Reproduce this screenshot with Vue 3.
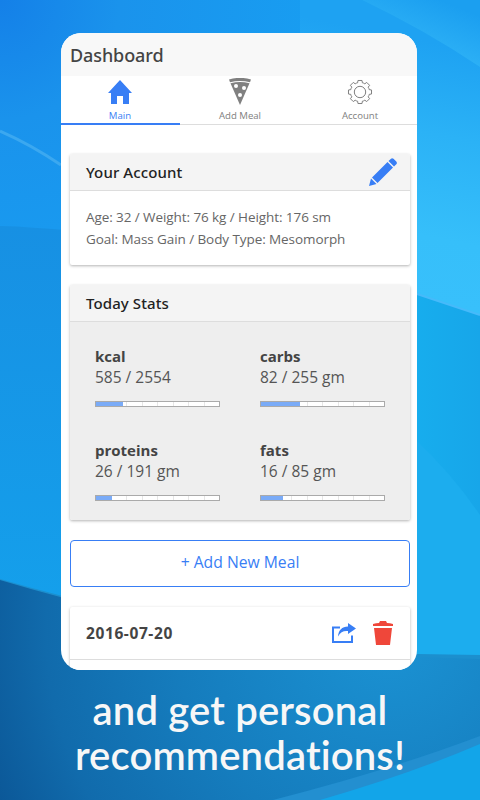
<template>
    <div class="promo">
        <svg class="backdrop" viewBox="0 0 480 800" preserveAspectRatio="none" aria-hidden="true">
            <defs>
                <radialGradient id="sky" gradientUnits="userSpaceOnUse" cx="0" cy="0" r="480">
                    <stop offset="0" stop-color="#1480e8" />
                    <stop offset="0.25" stop-color="#1a93ec" />
                    <stop offset="0.65" stop-color="#189df1" />
                    <stop offset="1" stop-color="#1ca2f1" />
                </radialGradient>
                <linearGradient id="left" x1="0" y1="0" x2="0" y2="1">
                    <stop offset="0" stop-color="#1790e3" />
                    <stop offset="1" stop-color="#14a1ec" />
                </linearGradient>
                <linearGradient id="corner" gradientUnits="userSpaceOnUse" x1="440" y1="0" x2="420" y2="50">
                    <stop offset="0" stop-color="#1b9ff0" />
                    <stop offset="1" stop-color="#2eb2f6" />
                </linearGradient>
                <linearGradient id="right" gradientUnits="userSpaceOnUse" x1="470" y1="50" x2="420" y2="300">
                    <stop offset="0" stop-color="#1ea2f2" />
                    <stop offset="0.35" stop-color="#2bb2f6" />
                    <stop offset="0.75" stop-color="#36bffa" />
                    <stop offset="1" stop-color="#38c0fb" />
                </linearGradient>
                <linearGradient id="lower" x1="0" y1="0" x2="1" y2="0">
                    <stop offset="0.7" stop-color="#17aeee" />
                    <stop offset="1" stop-color="#17a6e9" />
                </linearGradient>
                <radialGradient id="deep" gradientUnits="userSpaceOnUse" cx="390" cy="630" r="430">
                    <stop offset="0" stop-color="#1b93d4" />
                    <stop offset="0.5" stop-color="#157cbd" />
                    <stop offset="0.8" stop-color="#116bac" />
                    <stop offset="1" stop-color="#0b5797" />
                </radialGradient>
            </defs>
            <rect width="480" height="800" fill="url(#sky)" />
            <path d="M0 226Q60 227 240 250V640H0Z" fill="url(#left)" />
            <path d="M300 0H362Q425 30 480 67V330H300Z" fill="url(#right)" />
            <path d="M362 0H480V67Q425 30 362 0Z" fill="url(#corner)" />
            <path d="M240 260L417 294L480 315V700H240Z" fill="url(#lower)" />
            <path d="M417 441Q453 475 480 515V700H417Z" fill="#1cadee" />
            <path d="M417 294L480 315" stroke="#46bafa" stroke-width="2" />
            <path d="M0 131Q32 145 61 165" fill="none" stroke="#3ba8f0" stroke-width="3" />
            <path d="M0 579Q200 637 417 654L480 655V800H0Z" fill="#1c8fce" />
            <path d="M0 580Q200 640 417 657L480 659V800H0Z" fill="url(#deep)" />
            <path d="M273 800Q390 770 480 736V800Z" fill="#238fd0" />
            <path d="M320 800Q410 774 480 744V800Z" fill="#12a5e9" />
        </svg>

        <main class="phone">
            <div class="screen">
                <header class="title">Dashboard</header>

                <nav class="tabs">
                    <a v-for="tab in tabs" :key="tab.name" class="tab" :class="{ active: tab.name === current }" @click="current = tab.name">
                        <svg v-if="tab.icon === 'home'" class="tab-icon" viewBox="0 0 28 28">
                            <path d="M14 2L26 15H23V26H17V18H11V26H5V15H2Z" fill="currentColor" />
                        </svg>
                        <svg v-else-if="tab.icon === 'pizza'" class="tab-icon" viewBox="0 0 28 28">
                            <path d="M3 1.5Q14 -1.8 25 1.5L24 4.3Q14 1.5 4 4.3Z" fill="currentColor" />
                            <path d="M4.5 5.3Q14 2.7 23.5 5.3L14 27Z" fill="currentColor" />
                            <circle cx="10" cy="8" r="2" fill="#fff" />
                            <circle cx="18" cy="10" r="2" fill="#fff" />
                            <circle cx="14" cy="17" r="2" fill="#fff" />
                        </svg>
                        <svg v-else class="tab-icon" viewBox="0 0 28 28">
                            <path :d="gearPath" fill="none" stroke="currentColor" stroke-linejoin="round" />
                            <circle cx="14" cy="14" r="5.7" fill="none" stroke="currentColor" />
                        </svg>
                        <span class="tab-name">{{ tab.name }}</span>
                    </a>
                </nav>

                <div class="content">
                    <section class="card">
                        <h2 class="card-title">
                            Your Account
                            <svg class="edit" viewBox="0 0 28 28">
                                <path d="M0 28L2 20.5L7.5 26Z M3 19.5L18.500 4L24 9.5L8.5 25Z M19.5 3L22 .7Q23.2 -.4 24.5 .8L27.3 3.6Q28.5 5 27.3 6.2L25 8.5Z" fill="currentColor" />
                            </svg>
                        </h2>
                        <div class="account">
                            <p>Age: 32 / Weight: 76 kg / Height: 176 sm</p>
                            <p>Goal: Mass Gain / Body Type: Mesomorph</p>
                        </div>
                    </section>

                    <section class="card">
                        <h2 class="card-title">Today Stats</h2>
                        <div class="stats">
                            <div v-for="stat in stats" :key="stat.name" class="stat">
                                <strong>{{ stat.name }}</strong>
                                <span>{{ stat.value }} / {{ stat.goal }}{{ stat.unit }}</span>
                                <div class="meter">
                                    <i v-for="n in 8" :key="n"></i>
                                    <div class="fill" :style="{ width: percent(stat) + '%' }"></div>
                                </div>
                            </div>
                        </div>
                    </section>

                    <button class="add-meal">+ Add New Meal</button>

                    <section class="card day">
                        <div class="day-title">
                            <strong>2016-07-20</strong>
                            <svg class="share" viewBox="0 0 24 20">
                                <path d="M8 4.5H1V19H20V12.5" fill="none" stroke="currentColor" stroke-width="2" />
                                <path d="M6 13.5C6.5 7 10 3.8 16 3.5V0L24 5.5L16 11V8C11.5 7.5 8.5 9 6 13.5Z" fill="currentColor" />
                            </svg>
                            <svg class="trash" viewBox="0 0 20 24">
                                <path d="M0 5V3Q3 2 6 2L7 0H13L14 2Q17 2 20 3V5Z M1 7H19L17 24H3Z" fill="currentColor" />
                            </svg>
                        </div>
                    </section>
                </div>
            </div>
        </main>

        <p class="caption">and get personal<br>recommendations!</p>
    </div>
</template>

<script setup>
import { ref } from 'vue'

const current = ref('Main')

const tabs = [
    { name: 'Main', icon: 'home' },
    { name: 'Add Meal', icon: 'pizza' },
    { name: 'Account', icon: 'gear' },
]

const stats = [
    { name: 'kcal', value: 585, goal: 2554, unit: '' },
    { name: 'carbs', value: 82, goal: 255, unit: ' gm' },
    { name: 'proteins', value: 26, goal: 191, unit: ' gm' },
    { name: 'fats', value: 16, goal: 85, unit: ' gm' },
]

const gearPath = makeGear()

function percent(stat) {
    return Math.floor(stat.value / stat.goal * 100)
}

// eight teeth with rounded valleys between them
function makeGear() {
    const point = (radius, degrees) => {
        const angle = degrees * Math.PI / 180
        return `${14 + radius * Math.cos(angle)} ${14 + radius * Math.sin(angle)}`
    }
    let path = ''
    for (let i = 0; i < 8; i++) {
        const a = i * 45
        path += `${i ? 'L' : 'M'}${point(11.7, a - 10)}L${point(11.7, a + 10)}Q${point(8.4, a + 13)} ${point(9.6, a + 22.5)}Q${point(8.4, a + 32)} ${point(11.7, a + 35)}`
    }
    return path + 'Z'
}
</script>

<style>
body {
    margin: 0;
}
</style>

<style scoped>
.promo {
    position: relative;
    width: 480px;
    height: 800px;
    overflow: hidden;
    font-family: "Noto Sans", "Open Sans", sans-serif;
    color: #444;
    box-sizing: border-box;
    padding-top: 33px;
}

.backdrop {
    position: absolute;
    top: 0;
    left: 0;
    width: 100%;
    height: 100%;
}

.phone {
    position: relative;
    width: 356px;
    height: 637px;
    margin-left: 61px;
    border-radius: 20px;
    background-color: white;
    overflow: hidden;
}

.screen {
    width: 360px;
    margin-left: -1px;
}

.title {
    height: 43px;
    padding-left: 10px;
    line-height: 44px;
    font-size: 18px;
    font-weight: 500;
    letter-spacing: -0.1px;
    background-color: #f8f8f8;
}

.tabs {
    display: flex;
    height: 49px;
}

.tab {
    flex: 1;
    display: flex;
    flex-direction: column;
    align-items: center;
    box-sizing: border-box;
    padding-top: 2px;
    border-bottom: 1px solid #ddd;
    color: #808080;
    cursor: pointer;
}

.tab.active {
    color: #387ef5;
    border-bottom: 2px solid #387ef5;
}

.tab-icon {
    width: 28px;
    height: 28px;
}

.tab-name {
    font-family: "Open Sans", sans-serif;
    font-size: 9.6px;
    line-height: 14px;
    margin-top: 3px;
}

.content {
    padding: 29px 10px 0;
}

.card {
    margin-bottom: 20px;
    border-radius: 2px;
    background-color: white;
    box-shadow: 0 1px 3px rgba(0, 0, 0, 0.3);
    overflow: hidden;
}

.card-title {
    display: flex;
    justify-content: space-between;
    align-items: center;
    box-sizing: border-box;
    height: 37px;
    margin: 0;
    padding: 0 13px 0 16px;
    border-bottom: 1px solid #ddd;
    background-color: #f4f4f4;
    color: #222;
    font-size: 15px;
    font-weight: 500;
    letter-spacing: 0.1px;
}

.edit {
    width: 28px;
    height: 28px;
    color: #387ef5;
}

.account {
    box-sizing: border-box;
    height: 74px;
    padding: 15px 16px;
    font-family: "Open Sans", sans-serif;
    font-size: 13.5px;
    letter-spacing: -0.08px;
    line-height: 22px;
    color: #666;
    white-space: nowrap;
}

.account p {
    margin: 0;
}

.stats {
    display: grid;
    grid-template-columns: 125px 125px;
    column-gap: 40px;
    grid-auto-rows: 94px;
    box-sizing: border-box;
    height: 198px;
    padding: 24px 25px 0;
    background-color: #eee;
}

.stat {
    display: flex;
    flex-direction: column;
    font-family: "Open Sans", sans-serif;
    font-size: 15px;
    line-height: 20px;
    white-space: nowrap;
}

.stat span {
    margin-top: 1px;
    color: #555;
    font-size: 15.5px;
}

.meter {
    position: relative;
    display: flex;
    box-sizing: border-box;
    height: 6px;
    margin-top: 14px;
    border: 1px solid #aaa;
    background-color: white;
}

.meter i {
    flex: 1;
    box-sizing: border-box;
    border-right: 1px solid #e6e6e6;
}

.meter i:nth-child(8) {
    border: none;
}

.fill {
    position: absolute;
    top: 0;
    bottom: 0;
    left: 0;
    background-color: #7aabf7;
}

.add-meal {
    display: block;
    width: 100%;
    height: 47px;
    margin-bottom: 20px;
    padding: 0 0 3px;
    border: 1px solid #387ef5;
    border-radius: 4px;
    background-color: white;
    color: #387ef5;
    font-family: "Open Sans", sans-serif;
    font-size: 15.7px;
    cursor: pointer;
}

.day {
    height: 80px;
}

.day-title {
    display: flex;
    align-items: center;
    box-sizing: border-box;
    height: 53px;
    padding: 0 17px 0 16px;
    border-bottom: 1px solid #ddd;
    font-family: "Open Sans", sans-serif;
    font-size: 15.5px;
    letter-spacing: 0.6px;
}

.share {
    width: 24px;
    height: 20px;
    margin-left: auto;
    margin-right: 17px;
    color: #387ef5;
}

.trash {
    width: 20px;
    height: 24px;
    color: #ef473a;
}

.caption {
    position: relative;
    margin: 18px 0 0;
    color: #f7f7f7;
    font-family: Lato, sans-serif;
    font-size: 40px;
    font-weight: 600;
    font-variant-ligatures: none;
    letter-spacing: 0.15px;
    line-height: 45px;
    text-align: center;
    white-space: nowrap;
}
</style>
